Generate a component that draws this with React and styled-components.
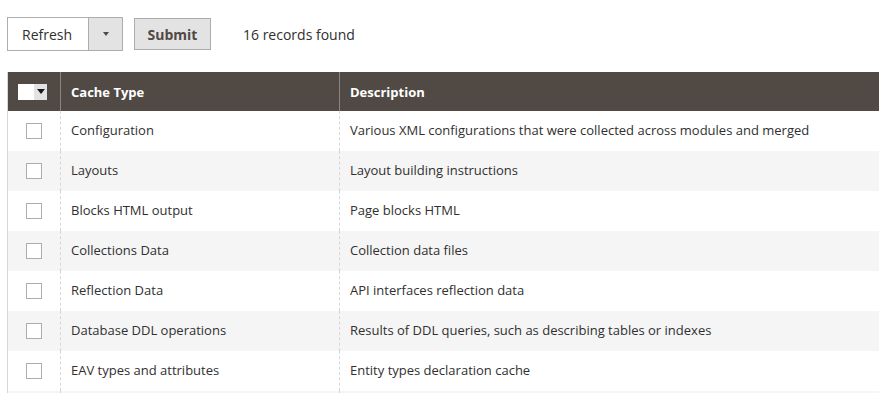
import React from 'react';
import styled, { createGlobalStyle } from 'styled-components';

const GlobalStyle = createGlobalStyle`
  html, body {
    margin: 0;
    padding: 0;
    background: #fff;
    overflow: hidden;
    font-family: 'Open Sans', 'Liberation Sans', sans-serif;
    color: #303030;
  }
`;

const rows = [
  ['Configuration', 'Various XML configurations that were collected across modules and merged'],
  ['Layouts', 'Layout building instructions'],
  ['Blocks HTML output', 'Page blocks HTML'],
  ['Collections Data', 'Collection data files'],
  ['Reflection Data', 'API interfaces reflection data'],
  ['Database DDL operations', 'Results of DDL queries, such as describing tables or indexes'],
  ['EAV types and attributes', 'Entity types declaration cache'],
];

const Page = styled.div`
  padding: 17px 0 0 7px;
  width: 920px;
  height: 393px;
  box-sizing: border-box;
  overflow: hidden;
`;

const Toolbar = styled.div`
  display: flex;
  align-items: center;
  height: 34px;
`;

const Select = styled.div`
  display: flex;
  height: 34px;
  box-sizing: border-box;
  border: 1px solid #adadad;
  background: #fff;
`;

const SelectLabel = styled.div`
  width: 81px;
  padding-left: 14px;
  box-sizing: border-box;
  display: flex;
  align-items: center;
  font-size: 14px;
  color: #303030;
  border-right: 1px solid #adadad;
`;

const SelectToggle = styled.div`
  width: 33px;
  background: #e3e3e3;
  display: flex;
  align-items: center;
  justify-content: center;
`;

const Caret = styled.span`
  width: 0;
  height: 0;
  border-left: ${p => p.$size}px solid transparent;
  border-right: ${p => p.$size}px solid transparent;
  border-top: ${p => p.$size + 1}px solid ${p => p.$color || '#514943'};
`;

const Button = styled.button`
  margin-left: 11px;
  height: 32px;
  width: 77px;
  box-sizing: border-box;
  border: 1px solid #adadad;
  background: #e3e3e3;
  color: #514943;
  font-family: 'Open Sans', 'Liberation Sans', sans-serif;
  font-size: 14px;
  font-weight: 700;
  padding: 0;
`;

const Count = styled.span`
  margin-left: 32px;
  font-size: 14px;
  color: #303030;
`;

const Grid = styled.table`
  margin-top: 21px;
  border-collapse: collapse;
  width: 913px;
  table-layout: fixed;
  font-size: 13px;
  border-left: 1px solid #d6d6d6;
`;

const HeadCell = styled.th`
  background: #514943;
  color: #fff;
  font-weight: 700;
  text-align: left;
  height: 39px;
  padding: 0 10px;
  width: ${p => p.$w || 'auto'};
  box-sizing: border-box;
  border-left: 1px solid #8a837f;
  &:first-child {
    border-left: none;
    padding: 0 0 0 10px;
  }
`;

const Row = styled.tr`
  background: ${p => (p.$alt ? '#f5f5f5' : '#fff')};
`;

const Cell = styled.td`
  height: 40px;
  padding: 0 10px 2px;
  box-sizing: border-box;
  color: #303030;
  border-left: 1px dashed #d6d6d6;
  white-space: nowrap;
  &:first-child {
    border-left: none;
    padding: 0 0 0 18px;
  }
`;

const Box = styled.span`
  display: block;
  width: 16px;
  height: 16px;
  box-sizing: border-box;
  border: 1px solid #adadad;
  background: #fff;
`;

const MassSelect = styled.span`
  display: flex;
  height: 16px;
`;

const MassBox = styled.span`
  width: 16px;
  background: #fff;
`;

const MassToggle = styled.span`
  width: 13px;
  background: #e3e3e3;
  display: flex;
  align-items: center;
  justify-content: center;
`;

export default function App() {
  return (
    <Page>
      <GlobalStyle />
      <Toolbar>
        <Select>
          <SelectLabel>Refresh</SelectLabel>
          <SelectToggle>
            <Caret $size={3} $color="#514943" />
          </SelectToggle>
        </Select>
        <Button>Submit</Button>
        <Count>16 records found</Count>
      </Toolbar>
      <Grid>
        <thead>
          <tr>
            <HeadCell $w="53px">
              <MassSelect>
                <MassBox />
                <MassToggle>
                  <Caret $size={4} $color="#1a1a1a" />
                </MassToggle>
              </MassSelect>
            </HeadCell>
            <HeadCell $w="279px">Cache Type</HeadCell>
            <HeadCell>Description</HeadCell>
          </tr>
        </thead>
        <tbody>
          {rows.map(([type, desc], i) => (
            <Row key={type} $alt={i % 2 === 1}>
              <Cell>
                <Box />
              </Cell>
              <Cell>{type}</Cell>
              <Cell>{desc}</Cell>
            </Row>
          ))}
          <Row $alt>
            <Cell />
            <Cell />
            <Cell />
          </Row>
        </tbody>
      </Grid>
    </Page>
  );
}
